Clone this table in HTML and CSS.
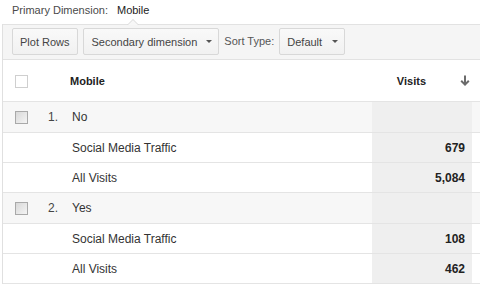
FILE: index.html
```html
<!DOCTYPE html>
<html>
<head>
<meta charset="utf-8">
<link rel="stylesheet" href="styles.css">
</head>
<body>
<div class="primary">
  <span class="primary-label">Primary Dimension:</span>
  <span class="primary-value">Mobile</span>
</div>
<div class="report">
  <div class="toolbar">
    <span class="notch"></span>
    <button class="btn">Plot Rows</button>
    <button class="btn btn-drop">Secondary dimension <span class="caret"></span></button>
    <span class="sort-label">Sort Type:</span>
    <button class="btn btn-drop btn-default">Default <span class="caret"></span></button>
  </div>
  <div class="row head">
    <div class="cell cb-cell"><span class="cb cb-empty"></span></div>
    <div class="cell head-name">Mobile</div>
    <div class="cell head-visits">
      <span>Visits</span>
      <svg class="sort-arrow" width="10" height="11" viewBox="0 0 10 11">
        <path d="M5 0.5 V9.5" stroke="#6b6b6b" stroke-width="2" fill="none"/>
        <path d="M1.2 5.8 L5 9.6 L8.8 5.8" stroke="#6b6b6b" stroke-width="2" fill="none"/>
      </svg>
    </div>
    <div class="cell"></div>
  </div>

  <div class="row group">
    <div class="cell cb-cell"><span class="cb"></span></div>
    <div class="cell num">1.</div>
    <div class="cell name">No</div>
    <div class="cell val"></div>
    <div class="cell"></div>
  </div>
  <div class="row detail">
    <div class="cell"></div>
    <div class="cell"></div>
    <div class="cell name">Social Media Traffic</div>
    <div class="cell val">679</div>
    <div class="cell"></div>
  </div>
  <div class="row detail">
    <div class="cell"></div>
    <div class="cell"></div>
    <div class="cell name">All Visits</div>
    <div class="cell val">5,084</div>
    <div class="cell"></div>
  </div>

  <div class="row group">
    <div class="cell cb-cell"><span class="cb"></span></div>
    <div class="cell num">2.</div>
    <div class="cell name">Yes</div>
    <div class="cell val"></div>
    <div class="cell"></div>
  </div>
  <div class="row detail">
    <div class="cell"></div>
    <div class="cell"></div>
    <div class="cell name">Social Media Traffic</div>
    <div class="cell val">108</div>
    <div class="cell"></div>
  </div>
  <div class="row detail">
    <div class="cell"></div>
    <div class="cell"></div>
    <div class="cell name">All Visits</div>
    <div class="cell val">462</div>
    <div class="cell"></div>
  </div>
</div>
</body>
</html>
```

FILE: styles.css
```css
html, body {
  margin: 0;
  padding: 0;
  background: #ffffff;
}
body {
  width: 480px;
  height: 291px;
  overflow: hidden;
  font-family: "Liberation Sans", Arial, sans-serif;
  color: #333333;
}
.primary {
  height: 24px;
  padding-left: 12px;
  font-size: 11px;
  line-height: 20px;
  display: flex;
  align-items: flex-start;
  gap: 9px;
}
.primary-label {
  color: #4a4a4a;
}
.primary-value {
  color: #222222;
}
.report {
  margin-left: 2px;
  border-left: 1px solid #e0e0e0;
  width: 477px;
}
.toolbar {
  position: relative;
  background: #f5f5f5;
  border-top: 1px solid #e2e2e2;
  border-bottom: 1px solid #e2e2e2;
  display: flex;
  align-items: flex-start;
  padding: 3px 0 0 9px;
  box-sizing: content-box;
  height: 31px;
}
.notch {
  position: absolute;
  left: 124px;
  top: -6px;
  width: 0;
  height: 0;
  border-left: 6px solid transparent;
  border-right: 6px solid transparent;
  border-bottom: 6px solid #d8d8d8;
}
.notch::after {
  content: "";
  position: absolute;
  left: -5px;
  top: 1px;
  width: 0;
  height: 0;
  border-left: 5px solid transparent;
  border-right: 5px solid transparent;
  border-bottom: 5px solid #f7f7f7;
}
.btn {
  height: 27px;
  box-sizing: border-box;
  padding: 0 7px;
  margin: 0 5px 0 0;
  font-family: "Liberation Sans", Arial, sans-serif;
  font-size: 11px;
  color: #444444;
  background: linear-gradient(#f9f9f9, #f1f1f1);
  border: 1px solid #d8d8d8;
  border-radius: 2px;
  display: flex;
  align-items: center;
}
.btn-drop {
  padding-left: 8px;
  padding-right: 6px;
}
.caret {
  display: inline-block;
  width: 0;
  height: 0;
  margin-left: 9px;
  border-left: 3px solid transparent;
  border-right: 3px solid transparent;
  border-top: 3px solid #555555;
}
.btn-default {
  padding-left: 7px;
}
.btn-default .caret {
  margin-left: 10px;
}
.sort-label {
  font-size: 11px;
  color: #555555;
  line-height: 27px;
  margin-right: 5px;
}
.row {
  display: grid;
  grid-template-columns: 39px 30px 1fr 100px 8px;
  border-bottom: 1px solid #e4e4e4;
  font-size: 12px;
}
.cell {
  display: flex;
  align-items: center;
  min-width: 0;
}
.head {
  height: 41px;
}
.head .cell {
  font-size: 11px;
  font-weight: bold;
  color: #222222;
}
.head-name {
  grid-column: 2 / 4;
  padding-left: 28px;
}
.head-visits {
  justify-content: flex-end;
  gap: 34px;
  padding-right: 2px;
}
.sort-arrow {
  display: block;
}
.cb-cell {
  padding-left: 12px;
}
.cb {
  width: 13px;
  height: 13px;
  box-sizing: border-box;
  border: 1px solid #a9a9a9;
  background: linear-gradient(135deg, #d8d8d8, #f4f4f4);
}
.cb-empty {
  border: 1px solid #cfcfcf;
  background: #ffffff;
  margin-top: 1px;
}
.group {
  height: 30px;
  background: #f7f7f7;
}
.detail {
  height: 29px;
  background: #ffffff;
}
.num {
  padding-left: 6px;
  color: #444444;
}
.name {
  color: #333333;
}
.val {
  background: #efefef;
  justify-content: flex-end;
  padding-right: 7px;
  font-weight: bold;
  color: #222222;
}
```
